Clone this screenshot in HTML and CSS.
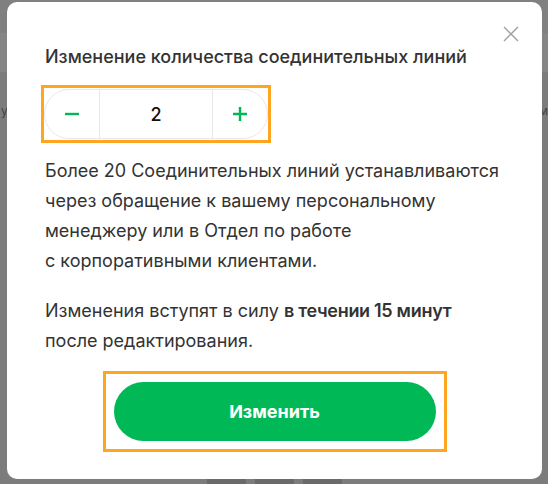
FILE: index.html
```html
<!DOCTYPE html>
<html lang="ru">
<head>
  <meta charset="UTF-8">
  <meta name="viewport" content="width=device-width, initial-scale=1.0">
  <title>Изменение количества соединительных линий</title>
  <link rel="stylesheet" href="styles.css">
</head>
<body>
  <div class="page">
    <div class="page-top"></div>
    <div class="page-band"></div>
    <div class="page-row">
      <span>у</span>
      <span>м</span>
    </div>
    <div class="page-tabs">
      <span class="tab"></span><span class="tab"></span><span class="tab"></span>
    </div>
  </div>

  <div class="overlay">
    <div class="modal">
      <button class="close" aria-label="Закрыть">
        <svg width="16" height="16" viewBox="0 0 16 16"><path d="M1 1L15 15M15 1L1 15" stroke="#a0a0a0" stroke-width="1.4" fill="none"/></svg>
      </button>

      <h2 class="title">Изменение количества соединительных линий</h2>

      <div class="highlight stepper-wrap">
        <div class="stepper">
          <button class="step minus" onclick="change(-1)">
            <svg width="16" height="16" viewBox="0 0 16 16"><path d="M1 8H15" stroke="#00b956" stroke-width="2.4"/></svg>
          </button>
          <div class="value" id="lines">2</div>
          <button class="step plus" onclick="change(1)">
            <svg width="16" height="16" viewBox="0 0 16 16"><path d="M1 8H15M8 1V15" stroke="#00b956" stroke-width="2.4"/></svg>
          </button>
        </div>
      </div>

      <p class="text">Более 20 Соединительных линий устанавливаются через обращение к&nbsp;вашему персональному менеджеру или в&nbsp;Отдел по&nbsp;работе<br>с&nbsp;корпоративными клиентами.</p>
      <p class="text">Изменения вступят в силу <b>в течении 15 минут</b><br>после редактирования.</p>

      <div class="highlight submit-wrap">
        <button class="submit">Изменить</button>
      </div>
    </div>
  </div>

  <script>
    function change(d) {
      const el = document.getElementById('lines');
      const v = Math.min(20, Math.max(1, parseInt(el.textContent) + d));
      el.textContent = v;
    }
  </script>
</body>
</html>
```

FILE: styles.css
```css
body {
  margin: 0;
  height: 484px;
  overflow: hidden;
  background: #7c7c7c;
  font-family: Inter, "Noto Sans", sans-serif;
  color: #333;
}
.page-top {
  height: 33px;
  background: #808080;
}
.page-band {
  height: 39px;
  background: #858585;
  border-bottom: 1px solid #7a7a7a;
}
.page-row {
  display: flex;
  justify-content: space-between;
  padding: 30px 0 0;
  margin: 0 0 0 1px;
  font-size: 12px;
  color: #444;
}
.page-tabs {
  position: absolute;
  left: 207px;
  bottom: 0;
  display: flex;
  gap: 9px;
}
.tab {
  width: 39px;
  height: 6px;
  background: #6a6a6a;
}
.overlay {
  position: absolute;
  left: 7px;
  top: 2px;
}
.modal {
  position: relative;
  box-sizing: border-box;
  width: 535px;
  height: 477px;
  padding: 43px 38px 0;
  background: #fff;
  border-radius: 10px;
}
.close {
  position: absolute;
  top: 24px;
  right: 23px;
  padding: 0;
  border: 0;
  background: none;
  cursor: pointer;
}
.title {
  margin: 0;
  font-size: 18px;
  line-height: 24px;
  font-weight: 500;
  color: #333;
}
.highlight {
  border: 3px solid #ffa620;
}
.stepper-wrap {
  display: inline-block;
  margin: 16px 0 0 -4px;
  padding: 1px 0 1px 0;
}
.stepper {
  display: flex;
  width: 224px;
  height: 50px;
  box-sizing: border-box;
  border: 1.5px solid #e8e8e8;
  border-radius: 25px;
}
.step {
  width: 55px;
  border: 0;
  background: none;
  display: flex;
  align-items: center;
  justify-content: center;
  padding: 0;
  cursor: pointer;
}
.minus {
  border-right: 1.5px solid #e8e8e8;
}
.plus {
  border-left: 1.5px solid #e8e8e8;
}
.value {
  flex: 1;
  display: flex;
  align-items: center;
  justify-content: center;
  font-size: 18px;
  font-weight: 500;
  color: #111;
}
.text {
  margin: 13px 0 0;
  font-size: 18px;
  line-height: 30px;
  color: #333;
}
.text + .text {
  margin-top: 20px;
}
.text b {
  font-weight: 600;
  letter-spacing: -0.3px;
}
.submit-wrap {
  width: 344px;
  margin: 15px auto 0;
  padding: 8px;
  box-sizing: border-box;
}
.submit {
  display: block;
  width: 100%;
  height: 59px;
  border: 0;
  border-radius: 30px;
  background: #00b956;
  color: #fff;
  font-family: inherit;
  font-size: 18px;
  font-weight: 700;
  cursor: pointer;
}
```
